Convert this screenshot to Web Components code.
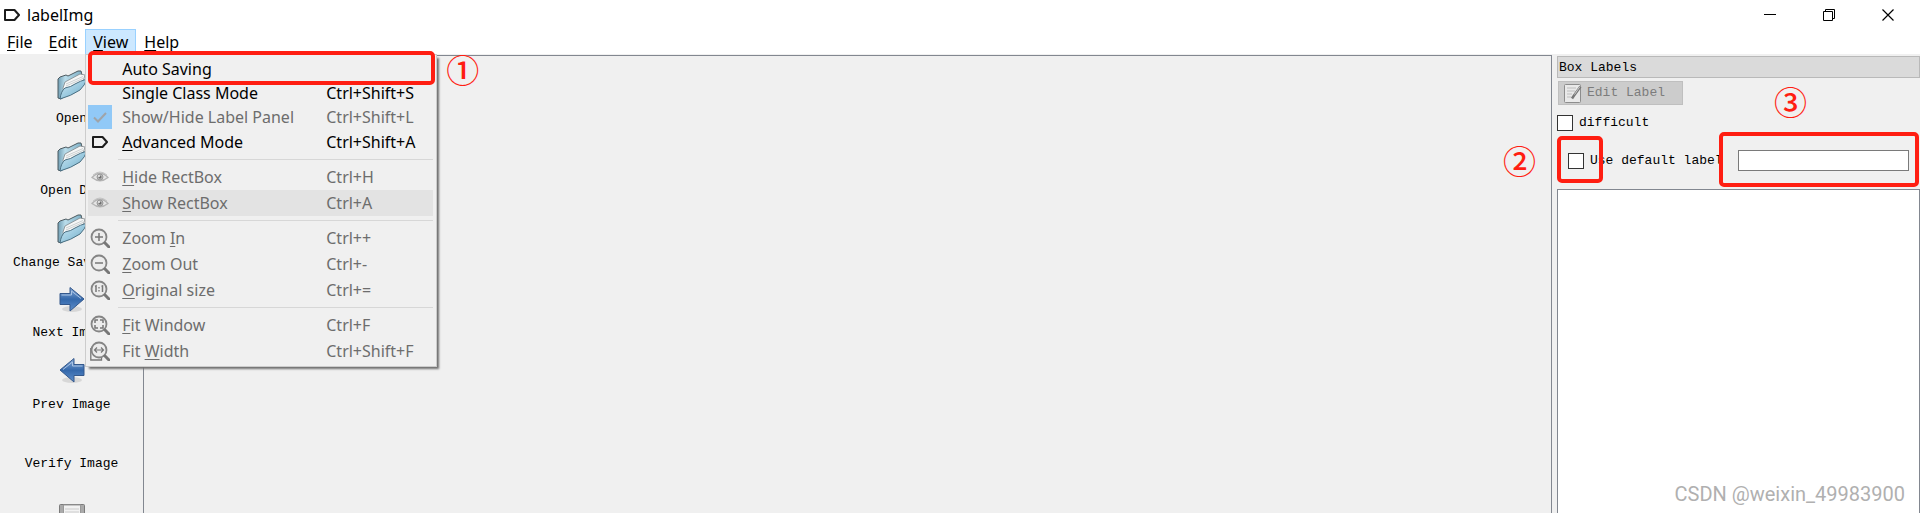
<!DOCTYPE html>
<html lang="en">
<head>
<meta charset="utf-8">
<title>labelImg</title>
<style>
    body {
        margin: 0;
        background: #f0f0f0;
        --ui: "Noto Sans", "Open Sans", sans-serif;
        --mono: "Liberation Mono", monospace;
        --red: #ff1e12;
        --frame: #828790;
    }
</style>
</head>
<body>
<label-app></label-app>

<script>
const OPEN = `
    <defs>
        <linearGradient id="f" x1="0" y1="0" x2="1" y2="1"><stop offset="0" stop-color="#d3ebf5"/><stop offset=".5" stop-color="#9dcbe0"/><stop offset="1" stop-color="#6fa9c4"/></linearGradient>
        <linearGradient id="b" x1="0" y1="0" x2="1" y2="0"><stop offset="0" stop-color="#6f9db3"/><stop offset=".3" stop-color="#b9dcea"/><stop offset="1" stop-color="#7fb0c6"/></linearGradient>
    </defs>
    <path d="M2 10 L4 8 L10 6 L12 7 L22 2 L25 2 L26 6 L26 14 L5 30 L2 29Z" fill="url(#b)" stroke="#4d5a60" stroke-linejoin="round"/>
    <path d="M7 19 L9 13 L24 5 L29 6 L27 13 L8 24Z" fill="#f6f7f7" stroke="#7f868a" stroke-width=".8"/>
    <path d="M10 15 L27 7.500 M10 17 L28 9" stroke="#c0c5c7" stroke-width=".8"/>
    <path d="M4 30 Q5 22 9 19 Q15 18 19 15 Q24 12 31 10 Q29 16 24 21 Q15 27 4 30Z" fill="url(#f)" stroke="#4a6f82" stroke-linejoin="round"/>`;

const LENS = `
    <circle cx="9" cy="9" r="7.5" fill="#ececec" stroke="#858585" stroke-width="1.8"/>
    <path d="M15 15 L19 19" stroke="#777" stroke-width="3" stroke-linecap="round"/>`;

const BLUE = `<defs><linearGradient id="g" x1="0" y1="0" x2="0" y2="1"><stop offset="0" stop-color="#86a9d6"/><stop offset=".5" stop-color="#3468ab"/><stop offset="1" stop-color="#5f8fcb"/></linearGradient></defs>`;

const ICONS = {
    app: [16, 12, `<path d="M1 1 H10.5 L15 6 L10.5 11 H1Z" fill="none" stroke="#1c1c1c" stroke-width="2" stroke-linejoin="round"/>`],
    open: [32, 32, OPEN],
    next: [26, 28, BLUE + `<ellipse cx="13" cy="23" rx="10" ry="3" fill="#000" opacity=".1"/><path d="M1 7.5 H11 V1.5 L25 13 L11 25 V18.5 H1Z" fill="url(#g)" stroke="#34588c"/><path d="M2.500 9 H12.500 V5 L22 12.500" fill="none" stroke="#a9c3e4"/>`],
    prev: [26, 28, BLUE + `<ellipse cx="13" cy="23" rx="10" ry="3" fill="#000" opacity=".1"/><path d="M25 7.500 H15 V1.500 L1 13 L15 25 V18.500 H25Z" fill="url(#g)" stroke="#34588c"/><path d="M23.500 9 H13.500 V5 L4 12.500" fill="none" stroke="#a9c3e4"/>`],
    save: [26, 26, `<rect x=".5" y=".5" width="25" height="25" rx="1" fill="#aaa" stroke="#7b7b7b"/><rect x="4.500" y="1" width="17" height="13" fill="#f2f2f2" stroke="#999"/><path d="M6 5 H20 M6 8 H20" stroke="#ccc"/><rect x="7" y="17" width="12" height="8" fill="#ddd"/>`],
    check: [24, 24, `<path d="M6 12.500 L10 16.500 L18 8" fill="none" stroke="#a0a4a8" stroke-width="2"/>`],
    eye: [18, 12, `<path d="M1 6.500 Q9 -2 17 6.500 Q9 13 1 6.500Z" fill="#e6e6e6" stroke="#b4b4b4" stroke-width="1.300"/><path d="M2 4 Q9 -2 16 4" fill="none" stroke="#c4c4c4"/><circle cx="9" cy="6" r="3" fill="#b8b8b8" stroke="#9a9a9a"/><circle cx="9" cy="6" r="1.500" fill="#707070"/><circle cx="8" cy="5" r="1" fill="#eee"/>`],
    zoomin: [20, 20, LENS + `<path d="M5 9 H13 M9 5 V13" stroke="#777" stroke-width="1.500"/>`],
    zoomout: [20, 20, LENS + `<path d="M5 9 H13" stroke="#777" stroke-width="1.500"/>`],
    original: [20, 20, LENS + `<path d="M5 6.500 L6 6 V12 M11.500 6.500 L12.500 6 V12" fill="none" stroke="#777" stroke-width="1.500"/><path d="M9 7 V8.500 M9 10 V11.500" stroke="#777" stroke-width="1.300"/>`],
    fit: [20, 20, LENS + `<path d="M5 8 V5 H8 M10 5 H13 V8 M13 10 V13 H10 M8 13 H5 V10" fill="none" stroke="#777" stroke-width="1.500"/>`],
    fitwidth: [20, 20, `<path d="M.800 7 V19 H11.500 V16" fill="#eee" stroke="#777" stroke-width="1.300"/>` + LENS + `<path d="M4.500 9 H13.500 M7 6.500 L4.500 9 L7 11.500 M11 6.500 L13.500 9 L11 11.500" fill="none" stroke="#777" stroke-width="1.200"/>`],
    edit: [18, 19, `<rect x=".5" y=".5" width="16" height="18" rx="1" fill="#e9e9e9" stroke="#8d8d8d"/><path d="M3 4 H12 M3 7 H11 M3 10 H8 M3 13 H7" stroke="#bdbdbd"/><path d="M16.500 2.500 L10 11.500 L8 14.500" stroke="#777" stroke-width="2.500" fill="none"/><path d="M16 2.500 L10.500 10.500" stroke="#c8c8c8"/>`],
    minimize: [12, 12, `<path d="M0 5.500 H12" stroke="#000"/>`],
    restore: [12, 12, `<path d="M.5 2.500 H9.500 V11.500 H.5Z M2.500 2.500 V.5 H11.500 V9.500 H9.500" fill="none" stroke="#000"/>`],
    close: [12, 12, `<path d="M.5 .5 L11.500 11.500 M11.500 .5 L.5 11.500" stroke="#000" stroke-width="1.200"/>`]
};

class AppIcon extends HTMLElement {
    connectedCallback() {
        const [w, h, art] = ICONS[this.getAttribute('name')];
        this.attachShadow({ mode: 'open' }).innerHTML = `
            <style>
                :host { display: inline-flex; flex: none; }
                svg { display: block; }
            </style>
            <svg width="${w}" height="${h}" viewBox="0 0 ${w} ${h}" aria-hidden="true">${art}</svg>
        `;
    }
}

class TitleBar extends HTMLElement {
    connectedCallback() {
        this.attachShadow({ mode: 'open' }).innerHTML = `
            <style>
                :host {
                    display: flex;
                    align-items: center;
                    height: 29px;
                    padding: 0 3px 0 4px;
                    background: #fff;
                    font: 16px/24px var(--ui);
                }
                .name { flex: 1; padding-left: 7px; }
                button {
                    display: flex;
                    align-items: center;
                    justify-content: center;
                    width: 59px;
                    height: 29px;
                    padding: 0;
                    border: 0;
                    background: none;
                }
            </style>
            <app-icon name="app"></app-icon>
            <span class="name"><slot></slot></span>
            <button aria-label="Minimize"><app-icon name="minimize"></app-icon></button>
            <button aria-label="Restore"><app-icon name="restore"></app-icon></button>
            <button aria-label="Close"><app-icon name="close"></app-icon></button>
        `;
    }
}

class MenuBar extends HTMLElement {
    connectedCallback() {
        this.attachShadow({ mode: 'open' }).innerHTML = `
            <style>
                :host { display: block; background: #fff; }
                nav { display: flex; margin-left: -1px; }
            </style>
            <nav><slot></slot></nav>
        `;
    }
}

class MenuTitle extends HTMLElement {
    connectedCallback() {
        this.attachShadow({ mode: 'open' }).innerHTML = `
            <style>
                :host { display: block; position: relative; }
                button {
                    display: block;
                    height: 25px;
                    padding: 0 7px;
                    border: 1px solid transparent;
                    border-bottom: 0;
                    background: none;
                    color: #000;
                    font: 16px/24px var(--ui);
                }
                :host([open]) button { background: #cce8ff; border-color: #99d1ff; }
                ::slotted(drop-menu) { position: absolute; left: 0; top: 100%; z-index: 2; }
            </style>
            <button><slot></slot></button>
            <slot name="menu"></slot>
        `;
    }
}

class DropMenu extends HTMLElement {
    connectedCallback() {
        this.attachShadow({ mode: 'open' }).innerHTML = `
            <style>
                :host {
                    display: block;
                    padding: 2px 3px 2px 2px;
                    border: 1px solid #ccc;
                    background: #f0f0f0;
                    box-shadow: 3px 3px 2px -1px #707070;
                }
            </style>
            <slot></slot>
        `;
    }
}

class MenuItem extends HTMLElement {
    connectedCallback() {
        const icon = this.getAttribute('icon');
        this.attachShadow({ mode: 'open' }).innerHTML = `
            <style>
                :host { display: block; position: relative; }
                button {
                    display: grid;
                    grid-template-columns: 24px 194px 107px;
                    column-gap: 10px;
                    align-items: center;
                    height: 24px;
                    padding: 0;
                    border: 0;
                    background: none;
                    color: #000;
                    font: 16px/24px var(--ui);
                    text-align: left;
                    white-space: nowrap;
                }
                :host([tall]) button { height: 26px; }
                :host([off]) button { color: #6d6d6d; }
                :host([current]) button { background: #e3e3e3; }
                .icon { display: flex; justify-content: center; }
                :host([checked]) .icon { background: #91c9f7; }
            </style>
            <button role="menuitem">
                <span class="icon">${icon ? `<app-icon name="${icon}"></app-icon>` : ''}</span>
                <span><slot></slot></span>
                <span>${this.getAttribute('keys') || ''}</span>
            </button>
            <slot name="mark"></slot>
        `;
    }
}

class MenuLine extends HTMLElement {
    connectedCallback() {
        this.attachShadow({ mode: 'open' }).innerHTML = `
            <style>
                :host { display: block; padding: 4px 0 4px 30px; }
                div { height: 1px; background: #d7d7d7; }
            </style>
            <div></div>
        `;
    }
}

// Red callout frame, or a circled number, laid over the interface
class MarkFrame extends HTMLElement {
    connectedCallback() {
        this.attachShadow({ mode: 'open' }).innerHTML = `
            <style>
                :host {
                    display: block;
                    position: absolute;
                    z-index: 3;
                    box-sizing: border-box;
                    border: 4px solid var(--red);
                    border-radius: 5px;
                    pointer-events: none;
                }
            </style>
        `;
    }
}

class MarkNumber extends HTMLElement {
    connectedCallback() {
        this.attachShadow({ mode: 'open' }).innerHTML = `
            <style>
                :host {
                    display: block;
                    position: absolute;
                    z-index: 3;
                    color: var(--red);
                    font: 500 33px/34px "Noto Sans CJK SC", sans-serif;
                }
            </style>
            <slot></slot>
        `;
    }
}

class ToolBar extends HTMLElement {
    connectedCallback() {
        this.attachShadow({ mode: 'open' }).innerHTML = `
            <style>
                :host {
                    display: flex;
                    flex: none;
                    flex-direction: column;
                    width: 143px;
                }
                .grip {
                    height: 2px;
                    margin: 2px 0 9px 2px;
                    background: repeating-linear-gradient(90deg, #b4b4b4 0 2px, transparent 2px 4px);
                }
            </style>
            <div class="grip"></div>
            <slot></slot>
        `;
    }
}

class ToolButton extends HTMLElement {
    connectedCallback() {
        const icon = this.getAttribute('icon');
        this.attachShadow({ mode: 'open' }).innerHTML = `
            <style>
                :host { display: block; }
                button {
                    display: flex;
                    flex-direction: column;
                    align-items: center;
                    gap: 10px;
                    width: 100%;
                    padding: 3px 0 11px;
                    border: 0;
                    background: none;
                    color: #000;
                    font: 13px/16px var(--mono);
                    white-space: nowrap;
                }
                .icon { display: flex; align-items: center; height: 32px; }
                :host([icon=next]) .icon { height: 30px; }
                :host([plain]) button { padding: 32px 0 26px; }
            </style>
            <button aria-label="${this.getAttribute('label') || this.textContent}">
                ${icon ? `<span class="icon"><app-icon name="${icon}"></app-icon></span>` : ''}
                <slot></slot>
            </button>
        `;
    }
}

class CanvasView extends HTMLElement {
    connectedCallback() {
        this.attachShadow({ mode: 'open' }).innerHTML = `
            <style>
                :host {
                    display: block;
                    flex: 1;
                    border: 1px solid var(--frame);
                    border-bottom: 0;
                }
            </style>
            <slot></slot>
        `;
    }
}

class LabelDock extends HTMLElement {
    connectedCallback() {
        this.attachShadow({ mode: 'open' }).innerHTML = `
            <style>
                :host {
                    display: flex;
                    flex: none;
                    flex-direction: column;
                    width: 363px;
                    margin-left: 5px;
                    padding-top: 1px;
                    font: 13px/16px var(--mono);
                }
                h2 {
                    margin: 0 0 3px;
                    padding: 3px 1px 1px;
                    border: 1px solid #b9b9b9;
                    background: #dadada;
                    font: inherit;
                }
                .edit {
                    display: flex;
                    align-items: center;
                    align-self: flex-start;
                    gap: 5px;
                    width: 125px;
                    height: 24px;
                    margin-left: 1px;
                    padding: 0 5px;
                    border: 1px solid #bfbfbf;
                    background: #ccc;
                    color: #7c7c7c;
                    font: inherit;
                }
                label { display: flex; align-items: center; gap: 6px; white-space: nowrap; }
                .difficult { margin-top: 10px; }
                .default {
                    position: relative;
                    display: flex;
                    align-items: center;
                    gap: 12px;
                    margin: 19px 11px 18px;
                }
                .default label { flex: 1; }
                input[type=checkbox] {
                    appearance: none;
                    width: 16px;
                    height: 16px;
                    margin: 0;
                    border: 1px solid #333;
                    background: #fff;
                }
                input[type=text] {
                    box-sizing: border-box;
                    width: 171px;
                    height: 21px;
                    padding: 0 3px;
                    border: 1px solid #7a7a7a;
                    background: #fff;
                    font: inherit;
                }
                .list { flex: 1; border: 1px solid var(--frame); border-bottom: 0; background: #fff; }
                .m2 { left: -11px; top: -14px; width: 46px; height: 47px; }
                .m3 { right: -10px; top: -18px; width: 200px; height: 55px; }
                .n2 { left: -65px; top: -7px; }
                .n3 { right: 102px; top: -66px; }
            </style>
            <h2>Box Labels</h2>
            <button class="edit" disabled><app-icon name="edit"></app-icon>Edit Label</button>
            <label class="difficult"><input type="checkbox">difficult</label>
            <div class="default">
                <label><input type="checkbox">Use default label</label>
                <input type="text" aria-label="Default label">
                <mark-frame class="m2"></mark-frame>
                <mark-frame class="m3"></mark-frame>
                <mark-number class="n2">②</mark-number>
                <mark-number class="n3">③</mark-number>
            </div>
            <div class="list"></div>
        `;
    }
}

class LabelApp extends HTMLElement {
    connectedCallback() {
        this.attachShadow({ mode: 'open' }).innerHTML = `
            <style>
                :host {
                    display: flex;
                    flex-direction: column;
                    position: relative;
                    height: 100vh;
                    overflow: hidden;
                    color: #000;
                }
                main { display: flex; flex: 1; min-height: 0; padding-top: 1px; }
                u { text-decoration-thickness: 1px; text-underline-offset: 2px; }
                .m1 { left: 0; right: -2px; top: -6px; height: 34px; }
                .n1 { left: 358px; top: -5px; }
                .credit {
                    position: absolute;
                    right: 15px;
                    bottom: 7px;
                    color: #b0b0b0;
                    font: 20px/24px Roboto, sans-serif;
                }
            </style>
            <title-bar>labelImg</title-bar>
            <menu-bar>
                <menu-title><u>F</u>ile</menu-title>
                <menu-title><u>E</u>dit</menu-title>
                <menu-title open><u>V</u>iew
                    <drop-menu slot="menu">
                        <menu-item>Auto Saving
                            <mark-frame slot="mark" class="m1"></mark-frame>
                            <mark-number slot="mark" class="n1">①</mark-number>
                        </menu-item>
                        <menu-item keys="Ctrl+Shift+S">Single Class Mode</menu-item>
                        <menu-item off checked icon="check" keys="Ctrl+Shift+L">Show/Hide Label Panel</menu-item>
                        <menu-item tall icon="app" keys="Ctrl+Shift+A"><u>A</u>dvanced Mode</menu-item>
                        <menu-line></menu-line>
                        <menu-item tall off icon="eye" keys="Ctrl+H"><u>H</u>ide RectBox</menu-item>
                        <menu-item tall off current icon="eye" keys="Ctrl+A"><u>S</u>how RectBox</menu-item>
                        <menu-line></menu-line>
                        <menu-item tall off icon="zoomin" keys="Ctrl++">Zoom <u>I</u>n</menu-item>
                        <menu-item tall off icon="zoomout" keys="Ctrl+-"><u>Z</u>oom Out</menu-item>
                        <menu-item tall off icon="original" keys="Ctrl+="><u>O</u>riginal size</menu-item>
                        <menu-line></menu-line>
                        <menu-item tall off icon="fit" keys="Ctrl+F"><u>F</u>it Window</menu-item>
                        <menu-item tall off icon="fitwidth" keys="Ctrl+Shift+F">Fit <u>W</u>idth</menu-item>
                    </drop-menu>
                </menu-title>
                <menu-title><u>H</u>elp</menu-title>
            </menu-bar>
            <main>
                <tool-bar>
                    <tool-button icon="open">Open</tool-button>
                    <tool-button icon="open">Open Dir</tool-button>
                    <tool-button icon="open">Change Save Dir</tool-button>
                    <tool-button icon="next">Next Image</tool-button>
                    <tool-button icon="prev">Prev Image</tool-button>
                    <tool-button plain>Verify Image</tool-button>
                    <tool-button icon="save" label="Save"></tool-button>
                </tool-bar>
                <canvas-view></canvas-view>
                <label-dock></label-dock>
            </main>
            <div class="credit">CSDN @weixin_49983900</div>
        `;
    }
}

customElements.define('app-icon', AppIcon);
customElements.define('title-bar', TitleBar);
customElements.define('menu-bar', MenuBar);
customElements.define('menu-title', MenuTitle);
customElements.define('drop-menu', DropMenu);
customElements.define('menu-item', MenuItem);
customElements.define('menu-line', MenuLine);
customElements.define('mark-frame', MarkFrame);
customElements.define('mark-number', MarkNumber);
customElements.define('tool-bar', ToolBar);
customElements.define('tool-button', ToolButton);
customElements.define('canvas-view', CanvasView);
customElements.define('label-dock', LabelDock);
customElements.define('label-app', LabelApp);
</script>
</body>
</html>
